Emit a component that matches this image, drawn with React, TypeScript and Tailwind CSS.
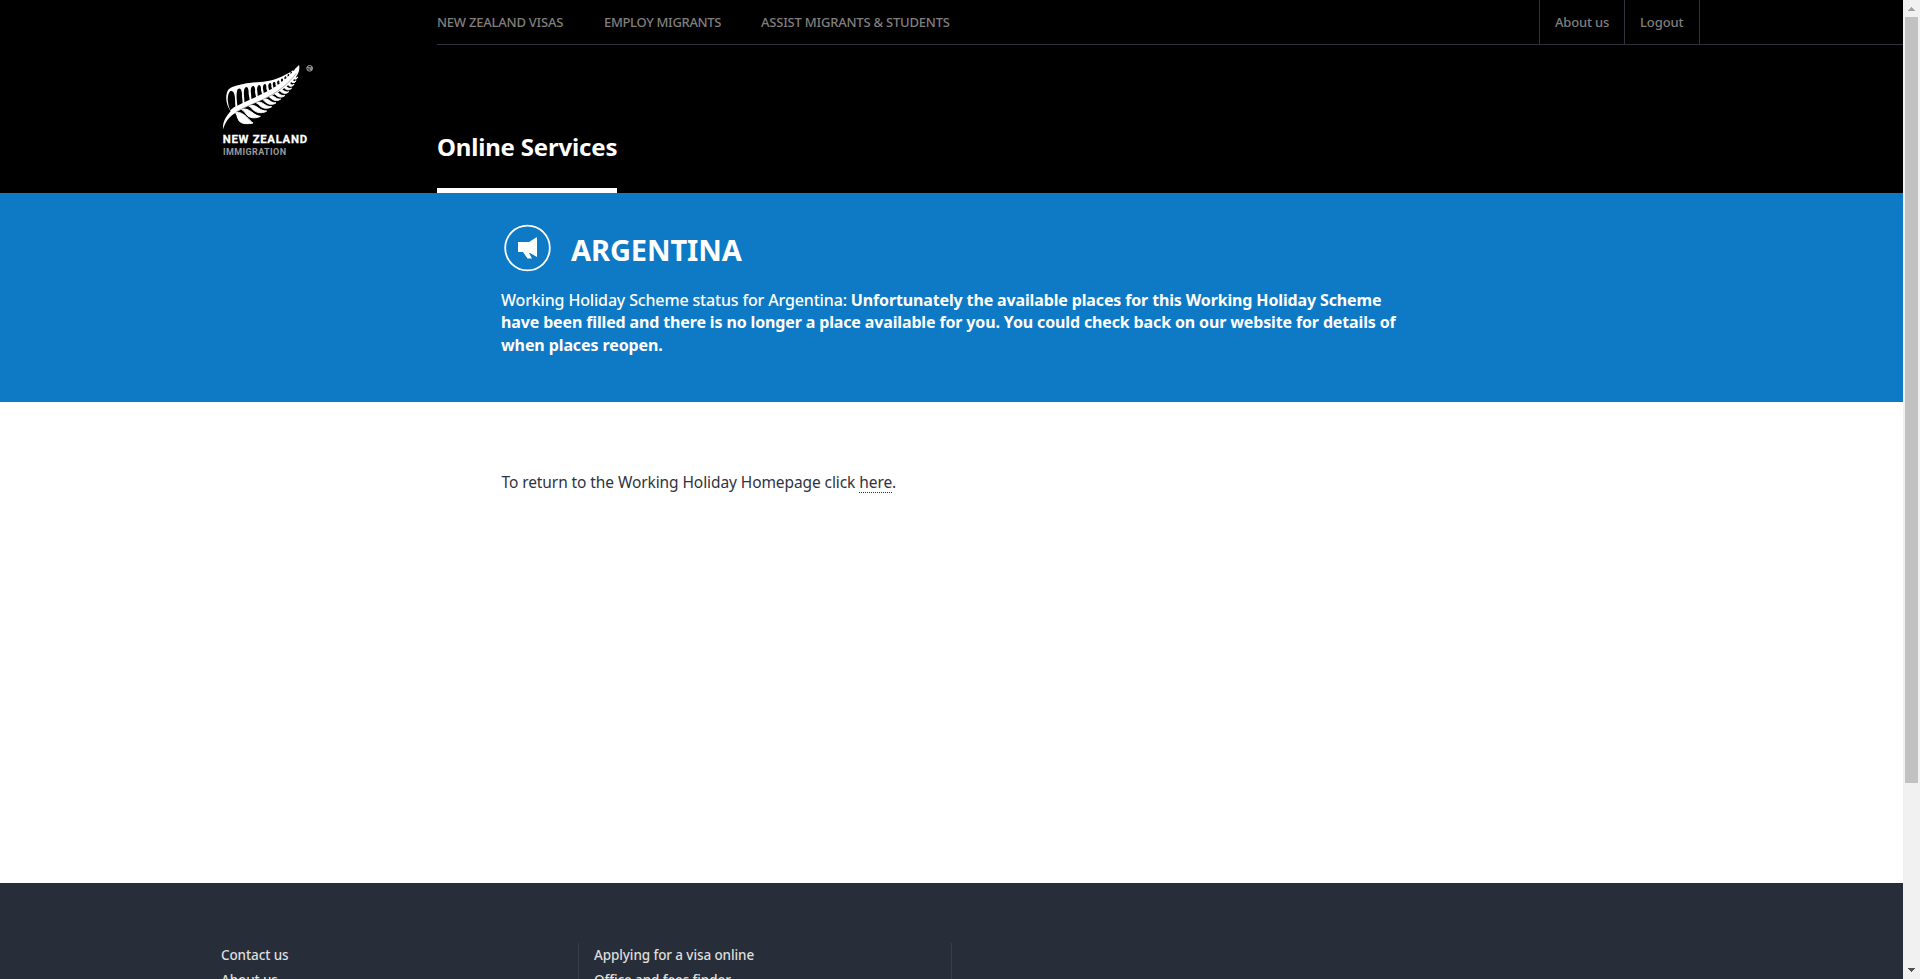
const navLinks = [
  { label: "NEW ZEALAND VISAS", className: "w-[167px] tracking-[-0.23px]" },
  { label: "EMPLOY MIGRANTS", className: "w-[157px] tracking-[-0.33px]" },
  { label: "ASSIST MIGRANTS & STUDENTS", className: "tracking-[-0.21px]" },
];

const leaves = [
  "M77 173C88 170 99 176 109 185C117 193 123 200 129 204C116 207 100 207 92 202C83 196 83 184 77 173Z",
  "M94 163C106 160 116 164 126 172C136 180 144 183 151 184C140 190 122 190 114 183C106 176 103 167 94 163Z",
  "M115 152C126 149 137 152 145 159C154 166 162 168 170 168C160 175 145 174 136 169C127 164 124 156 115 152Z",
  "M136 142C146 139 155 142 163 148C171 154 178 155 185 155C176 161 163 161 155 156C147 151 144 145 136 142Z",
  "M155 132C165 130 173 132 180 138C187 143 192 144 198 143C190 150 178 149 171 144C164 140 162 135 155 132Z",
  "M173 122C182 120 188 122 195 127C201 132 206 133 212 132C205 138 194 138 187 133C181 129 179 125 173 122Z",
  "M189 112C197 110 203 112 208 117C214 122 219 122 225 121C218 128 208 127 202 123C196 119 195 115 189 112Z",
  "M204 102C211 101 216 103 221 107C226 111 230 112 236 110C230 117 221 116 215 112C210 109 210 105 204 102Z",
  "M217 92C223 91 228 93 232 97C236 101 240 101 245 99C240 106 232 105 227 102C222 99 222 95 217 92Z",
  "M229 82C234 82 238 83 241 87C245 91 248 91 252 88C248 95 241 95 237 92C233 89 233 85 229 82Z",
  "M238 72C243 72 246 74 249 77C252 80 255 80 258 77C255 84 249 84 246 82C242 79 242 75 238 72Z",
  "M246 62C250 62 253 64 255 67C258 70 260 69 263 66C261 73 256 73 253 72C250 70 250 65 246 62Z",
];

const gaps = [
  "M61 166C52 146 50 121 60 109C69 104 74 115 75 129L76 155C70 157 66 161 61 166Z",
  "M82 152C81 136 77 116 83 103C91 95 97 106 96 123L98 144Z",
  "M103 142C104 127 98 110 105 98C112 91 117 101 116 116L119 134Z",
  "M124 132C125 118 119 105 125 95C132 88 137 98 135 111L138 126Z",
  "M143 123C144 111 138 101 144 92C150 86 154 94 153 105L156 117Z",
  "M161 114C161 104 156 97 161 89C167 84 170 91 169 101L172 109Z",
  "M177 106C177 98 172 92 177 86C182 81 185 88 184 95L186 101Z",
  "M190 98C190 91 186 88 190 82C195 78 198 84 196 90L199 93Z",
  "M203 90C203 84 199 82 203 78C207 74 209 79 208 84L210 85Z",
  "M214 81C214 76 211 76 214 72C218 68 220 73 219 77L221 76Z",
  "M224 73C224 69 221 69 225 65C228 62 230 66 229 70Z",
  "M233 65C233 61 231 62 234 58C237 55 239 59 237 62Z",
  "M242 57C241 54 240 54 243 51C246 48 247 52 245 54Z",
  "M250 48C249 45 249 46 251 43C254 41 255 44 253 46Z",
];

function FernLogo() {
  return (
    <svg viewBox="0 0 345 330" className="h-[110px] w-[115px]" fill="#fff">
      <path d="M39 223C38 211 41 198 48 187C53 179 57 174 62 169C47 149 44 119 56 103C64 95 82 91 100 87C132 80 169 84 207 68C237 56 256 43 267 30C271 43 265 60 251 74C226 101 202 115 170 129C137 144 100 158 77 173C57 185 46 201 39 223Z" />
      <g fill="#000">
        {gaps.map((d) => (
          <path key={d} d={d} />
        ))}
      </g>
      <g stroke="#fff" strokeWidth="3">
        {leaves.map((d) => (
          <path key={d} d={d} />
        ))}
      </g>
      <path d="M78 171C112 151 148 141 181 122C211 105 237 84 259 55" fill="none" stroke="#000" strokeWidth="1" />
      <circle cx="299" cy="40" r="8.5" fill="none" stroke="#ccc" strokeWidth="2.5" />
      <text x="292" y="44" fontSize="10" fontWeight="700" fill="#ccc" fontFamily="Roboto, sans-serif" textLength="14" lengthAdjust="spacingAndGlyphs">
        TM
      </text>
      <text x="38" y="265" fontSize="34" fontWeight="700" fontFamily="Roboto, sans-serif" textLength="253" stroke="#fff" strokeWidth="0.8">
        NEW ZEALAND
      </text>
      <text x="39" y="299" fontSize="27" fontWeight="700" fill="#999" fontFamily="Roboto, sans-serif" textLength="189">
        IMMIGRATION
      </text>
    </svg>
  );
}

function Header() {
  return (
    <header className="flex h-[193px] bg-black pl-[210px]">
      <a className="mt-[55px] w-[227px]">
        <FernLogo />
      </a>
      <div className="flex flex-1 flex-col">
        <nav className="flex h-[45px] border-b border-[#32323c] text-[13px] leading-[44px] font-medium text-[#807f7e]">
          <div className="flex flex-1">
            {navLinks.map((link) => (
              <a key={link.label} className={link.className}>
                {link.label}
              </a>
            ))}
          </div>
          <div className="mr-[203px] flex border-r border-[#32323c]">
            <a className="w-[85px] border-l border-[#32323c] pl-[15px] tracking-[-0.18px]">About us</a>
            <a className="w-[75px] border-l border-[#32323c] pl-[15px] tracking-[-0.1px]">Logout</a>
          </div>
        </nav>
        <div className="mt-auto flex">
          <a className="h-[62px] w-[180px] shrink-0 border-b-[5px] border-white text-2xl leading-8 font-bold tracking-[-0.18px] whitespace-nowrap text-white">
            Online Services
          </a>
        </div>
      </div>
    </header>
  );
}

function Alert() {
  return (
    <section className="h-[209px] bg-[#0e79c4] pt-[30px] pl-[501px] text-white">
      <div className="flex h-[54px] items-start">
        <svg viewBox="-1 0 51 50" className="h-[50px] w-[51px] shrink-0">
          <circle cx="25.5" cy="25" r="22.3" fill="none" stroke="#fff" strokeWidth="1.8" />
          <path d="M16 19H27L35 14V34L28 30H27L30 35.5H25.5L21 29H16Z" fill="#fff" />
        </svg>
        <h1 className="pt-[9px] pl-[19px] text-[29px] leading-[36px] font-bold tracking-[-0.1px]">ARGENTINA</h1>
      </div>
      <p className="mt-[12px] text-base leading-[22.4px] font-bold whitespace-nowrap">
        <span className="font-medium tracking-[-0.16px]">Working Holiday Scheme status for Argentina: </span>
        <span className="tracking-[-0.14px]">Unfortunately the available places for this Working Holiday Scheme</span>
        <br />
        <span className="tracking-[-0.14px]">
          have been filled and there is no longer a place available for you. You could check back on our website for details of
        </span>
        <br />
        <span className="tracking-[-0.1px]">when places reopen.</span>
      </p>
    </section>
  );
}

function Footer() {
  return (
    <footer className="flex h-24 bg-[#272e39] pt-[60px] pl-[221px] text-[13.5px] leading-[25px] font-medium tracking-[-0.1px] text-[#dededc]">
      <ul className="w-[358px] border-r border-[#383d49]">
        <li>Contact us</li>
        <li>About us</li>
      </ul>
      <ul className="w-[373px] border-r border-[#383d49] pl-[15px]">
        <li>Applying for a visa online</li>
        <li>Office and fees finder</li>
      </ul>
    </footer>
  );
}

function Scrollbar() {
  return (
    <div className="flex w-[17px] flex-col items-center bg-[#f1f1f1]">
      <svg viewBox="0 0 17 17" className="h-[17px] w-[17px] shrink-0" shapeRendering="crispEdges">
        <path d="M5 11L8.5 7L12 11Z" fill="#a3a3a3" />
      </svg>
      <div className="h-[766px] w-[13px] bg-[#c1c1c1]" />
      <svg viewBox="0 0 17 17" className="mt-auto h-[17px] w-[17px] shrink-0" shapeRendering="crispEdges">
        <path d="M5 6L8.5 10L12 6Z" fill="#505050" />
      </svg>
    </div>
  );
}

export default function App() {
  return (
    <div className="flex h-[979px] w-[1920px] overflow-hidden bg-white font-['Noto_Sans',sans-serif]">
      <div className="flex flex-1 flex-col overflow-hidden">
        <Header />
        <Alert />
        <main className="h-[481px] shrink-0 pt-[68px] pl-[501.5px] text-[15.5px] leading-6 tracking-[-0.09px] text-[#30333f]">
          To return to the Working Holiday Homepage click{" "}
          <a className="inline-block h-[23px] border-b border-dotted border-[#282d39]">here</a>.
        </main>
        <Footer />
      </div>
      <Scrollbar />
    </div>
  );
}
